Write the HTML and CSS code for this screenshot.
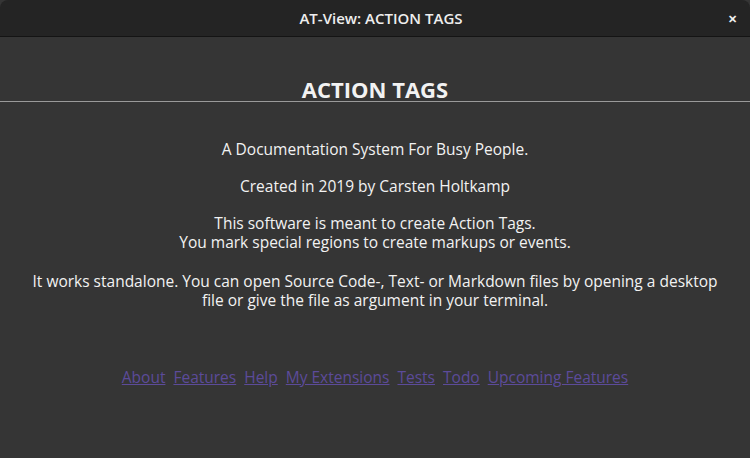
FILE: index.html
```html
<!DOCTYPE html>
<html>
<head>
<meta charset="utf-8">
<link rel="stylesheet" href="styles.css">
</head>
<body>
<div class="window">
  <header class="titlebar">
    <span class="title">AT-View: ACTION TAGS</span>
    <span class="close">&#x2715;</span>
  </header>
  <main class="content">
    <h1 class="heading">ACTION TAGS</h1>
    <hr class="rule">
    <p class="para">A Documentation System For Busy People.</p>
    <p class="para">Created in 2019 by Carsten Holtkamp</p>
    <p class="para">This software is meant to create Action Tags.<br>You mark special regions to create markups or events.</p>
    <p class="para">It works standalone. You can open Source Code-, Text- or Markdown files by opening a desktop<br>file or give the file as argument in your terminal.</p>
    <nav class="links">
      <a href="#">About</a>
      <a href="#">Features</a>
      <a href="#">Help</a>
      <a href="#">My Extensions</a>
      <a href="#">Tests</a>
      <a href="#">Todo</a>
      <a href="#">Upcoming Features</a>
    </nav>
  </main>
</div>
</body>
</html>
```
FILE: styles.css
```css
html, body {
  margin: 0;
  padding: 0;
  background: #353535;
  height: 100%;
}
body {
  font-family: "Open Sans", "Noto Sans", sans-serif;
  color: #f2f2f2;
}
.window {
  height: 458px;
  display: flex;
  flex-direction: column;
}
.titlebar {
  height: 36px;
  background: #242424;
  border-bottom: 1px solid #141414;
  border-radius: 8px 8px 0 0;
  display: flex;
  align-items: center;
  justify-content: center;
  position: relative;
  padding-left: 12px;
}
.title {
  font-size: 15px;
  font-weight: 600;
  color: #eeeeee;
}
.close {
  position: absolute;
  right: 13px;
  top: 11px;
  font-size: 11px;
  font-weight: 700;
  color: #f0f0f0;
}
.content {
  flex: 1;
  text-align: center;
  padding-top: 40px;
}
.heading {
  margin: 0;
  font-size: 22px;
  font-weight: 700;
  line-height: 24px;
}
.rule {
  margin: 0;
  border: none;
  border-top: 1px solid #9a9a9a;
}
.para {
  margin: 0;
  font-size: 15.5px;
  line-height: 19px;
  margin-top: 18px;
}
.rule + .para {
  margin-top: 38px;
}
.para:nth-of-type(4) {
  margin-top: 20px;
}
.links {
  margin-top: 56px;
  font-size: 15.5px;
  display: flex;
  justify-content: center;
  gap: 8px;
}
.links a {
  color: #5c4b9a;
  text-decoration: underline;
}
```
